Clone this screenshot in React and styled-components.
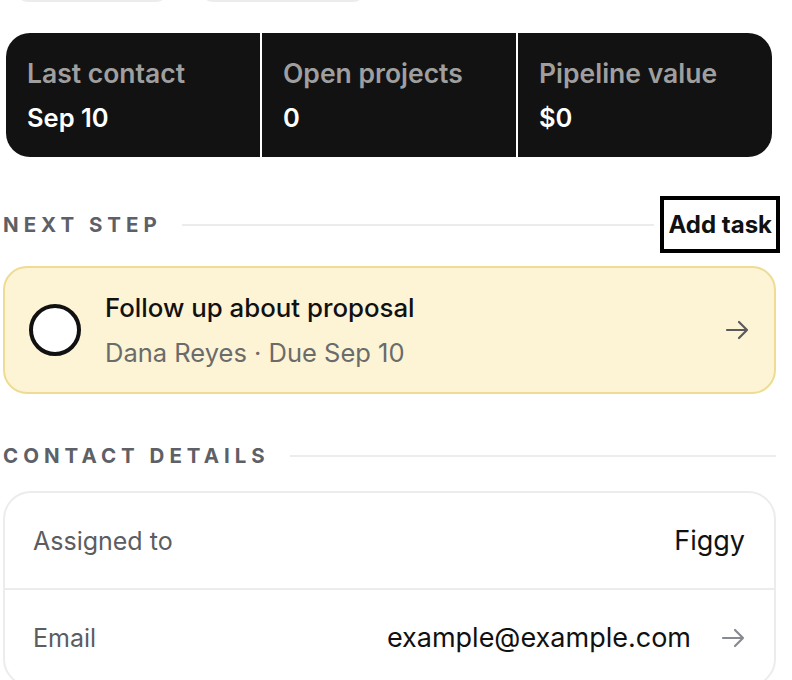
import styled, { createGlobalStyle } from 'styled-components';

const GlobalStyle = createGlobalStyle`
    body {
        margin: 0;
        background: #ffffff;
        font-family: Inter, "Noto Sans", sans-serif;
        color: #111111;
        overflow: hidden;
    }
`;

const stats = [
    { label: 'Last contact', value: 'Sep 10' },
    { label: 'Open projects', value: '0' },
    { label: 'Pipeline value', value: '$0' },
];

const details = [
    { label: 'Assigned to', value: 'Figgy' },
    { label: 'Email', value: 'example@example.com', link: true },
];

function Arrow({ color }) {
    return (
        <svg width="24" height="20" viewBox="0 0 24 20" fill="none">
            <path d="M2 10h20M14 2l8 8-8 8" stroke={color} strokeWidth="2.2" strokeLinecap="round" strokeLinejoin="round" />
        </svg>
    );
}

export default function App() {
    return (
        <Page>
            <GlobalStyle />
            <ActionBar>
                <GhostButton $width={152} />
                <GhostButton $width={164} />
            </ActionBar>

            <StatsCard>
                {stats.map((s) => (
                    <StatCell key={s.label}>
                        <StatLabel>{s.label}</StatLabel>
                        <StatValue>{s.value}</StatValue>
                    </StatCell>
                ))}
            </StatsCard>

            <Section $top={43}>
                <SectionHeader>
                    <SectionTitle>Next step</SectionTitle>
                    <Rule />
                    <TextButton>Add task</TextButton>
                </SectionHeader>
                <TaskCard>
                    <Check />
                    <TaskText>
                        <TaskTitle>Follow up about proposal</TaskTitle>
                        <TaskMeta>Dana Reyes · Due Sep 10</TaskMeta>
                    </TaskText>
                    <Arrow color="#5a5a5a" />
                </TaskCard>
            </Section>

            <Section $top={37}>
                <SectionHeader>
                    <SectionTitle>Contact details</SectionTitle>
                    <Rule />
                </SectionHeader>
                <DetailsCard>
                    {details.map((d) => (
                        <DetailRow key={d.label}>
                            <DetailLabel>{d.label}</DetailLabel>
                            <DetailValue>
                                {d.value}
                                {d.link && <Arrow color="#878a90" />}
                            </DetailValue>
                        </DetailRow>
                    ))}
                </DetailsCard>
            </Section>
        </Page>
    );
}

const Page = styled.div`
    width: 773px;
    padding: 0 0 0 3px;
`;

const ActionBar = styled.div`
    display: flex;
    gap: 33px;
    margin: -42px 0 0 13px;
`;

const GhostButton = styled.div`
    width: ${props => props.$width}px;
    height: 44px;
    box-sizing: border-box;
    border: 2px solid #ececec;
    border-radius: 12px;
    background: #ffffff;
`;

const StatsCard = styled.div`
    margin: 31px 4px 0 3px;
    display: grid;
    grid-template-columns: repeat(3, 1fr);
    gap: 2px;
    background: #ffffff;
    border-radius: 24px;
    overflow: hidden;
`;

const StatCell = styled.div`
    background: #121212;
    padding: 24px 20px 23px 21px;
    display: flex;
    flex-direction: column;
    gap: 13px;
`;

const StatLabel = styled.div`
    font-size: 26.5px;
    line-height: 32px;
    font-weight: 600;
    color: #9f9f9f;
`;

const StatValue = styled.div`
    font-size: 25.5px;
    line-height: 32px;
    font-weight: 600;
    color: #ffffff;
`;

const Section = styled.section`
    margin-top: ${props => props.$top}px;
`;

const SectionHeader = styled.div`
    display: flex;
    align-items: center;
    height: 49px;
`;

const SectionTitle = styled.h2`
    margin: 0;
    font-size: 20.5px;
    line-height: 24px;
    font-weight: 700;
    letter-spacing: 5px;
    text-transform: uppercase;
    color: #5d6066;
`;

const Rule = styled.div`
    flex: 1;
    height: 2px;
    background: #ececec;
    margin-left: 20px;
`;

const TextButton = styled.button`
    margin-left: 10px;
    padding: 8px 4px;
    border: none;
    background: #ffffff;
    font-family: inherit;
    font-size: 24px;
    line-height: 33px;
    font-weight: 700;
    color: #111111;
    outline: 4px solid #000000;
`;

const TaskCard = styled.div`
    margin-top: 17px;
    height: 128px;
    box-sizing: border-box;
    display: flex;
    align-items: center;
    gap: 24px;
    padding: 0 25px 0 24px;
    background: #fdf4d6;
    border: 2px solid #eedc93;
    border-radius: 24px;
`;

const Check = styled.div`
    width: 52px;
    height: 52px;
    box-sizing: border-box;
    border: 4px solid #111111;
    border-radius: 50%;
    background: #ffffff;
    flex-shrink: 0;
`;

const TaskText = styled.div`
    flex: 1;
    display: flex;
    flex-direction: column;
    gap: 13px;
`;

const TaskTitle = styled.div`
    font-size: 25.8px;
    line-height: 32px;
    font-weight: 500;
    color: #111111;
`;

const TaskMeta = styled.div`
    font-size: 25.5px;
    line-height: 32px;
    color: #6b6b6b;
`;

const DetailsCard = styled.div`
    margin-top: 11px;
    border: 2px solid #ececec;
    border-radius: 28px;
    overflow: hidden;
`;

const DetailRow = styled.div`
    height: 95px;
    display: flex;
    align-items: center;
    justify-content: space-between;
    padding: 0 29px 0 28px;
    & + & {
        border-top: 2px solid #ececec;
    }
`;

const DetailLabel = styled.div`
    font-size: 25px;
    color: #5b5d61;
`;

const DetailValue = styled.div`
    display: flex;
    align-items: center;
    gap: 30px;
    font-size: 27px;
    color: #111111;
`;
